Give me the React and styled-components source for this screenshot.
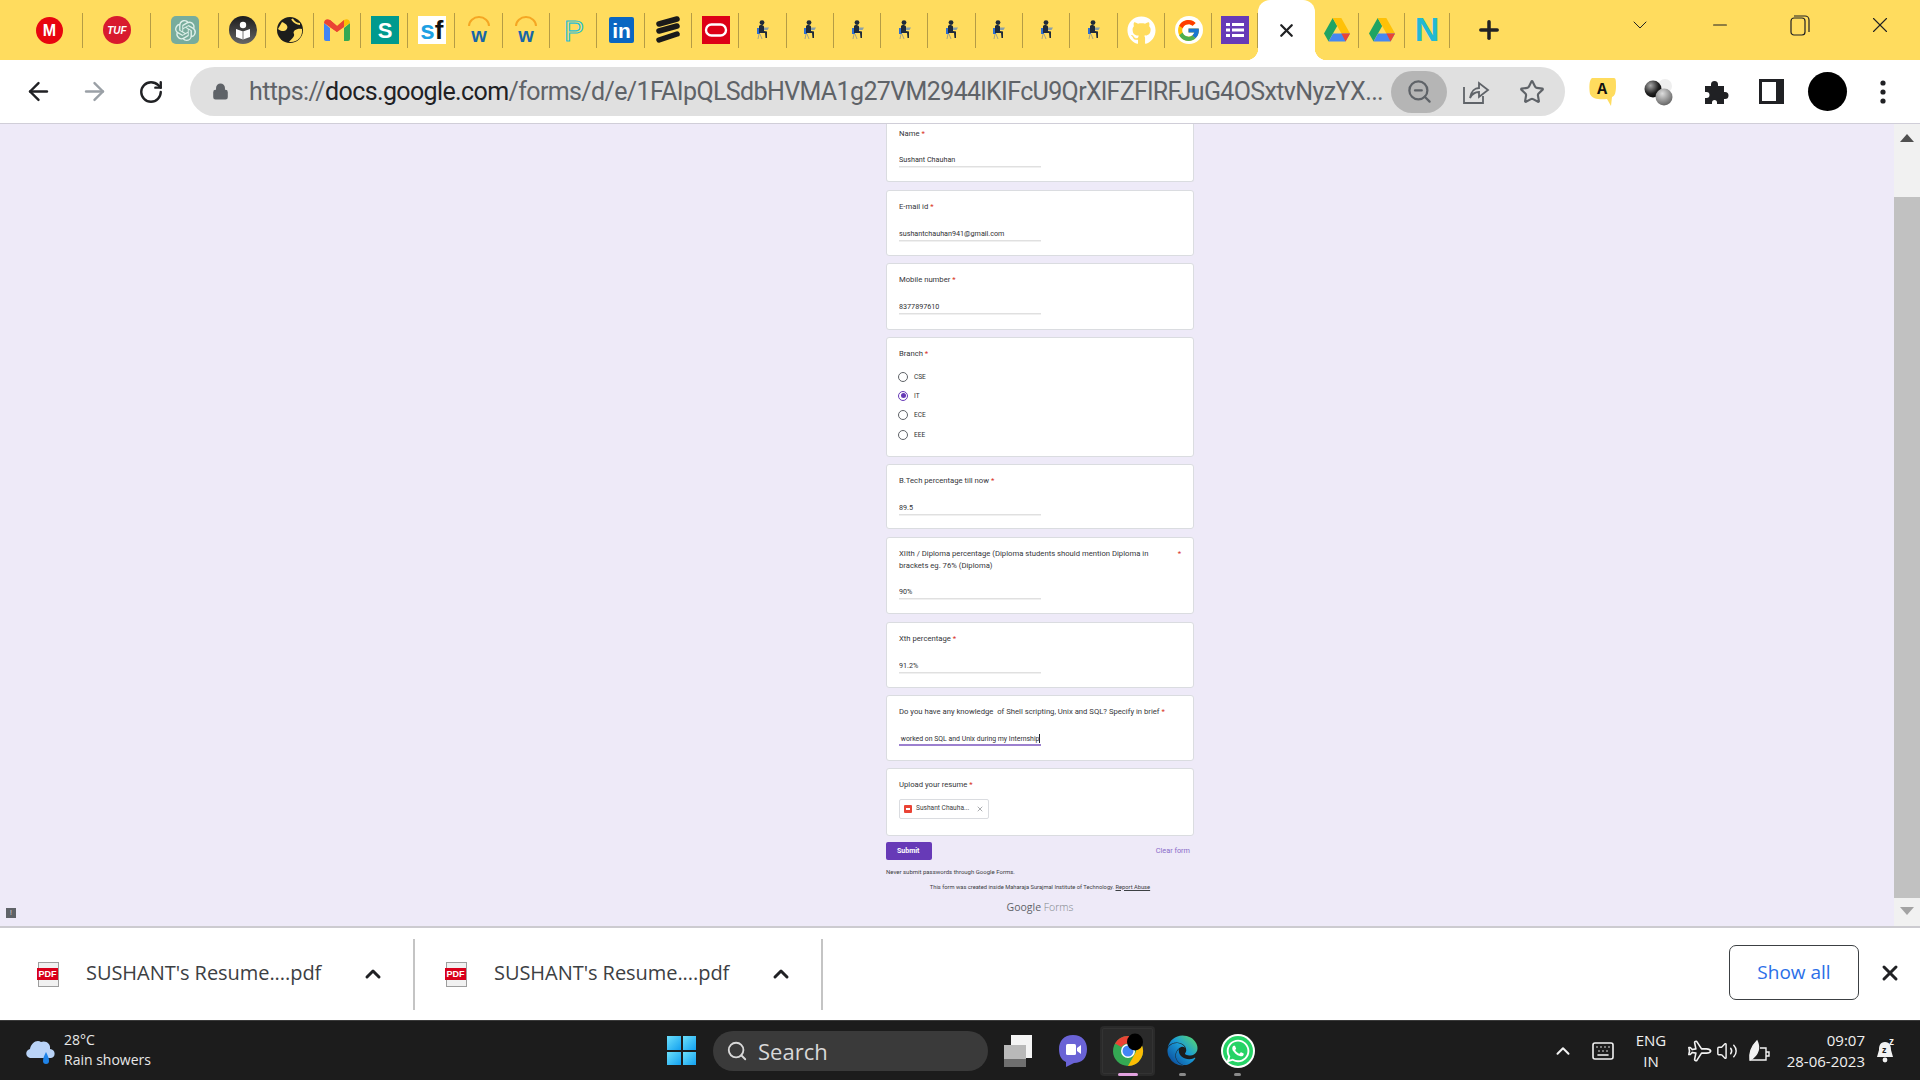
import React from 'react';
import styled, { createGlobalStyle } from 'styled-components';
import {
  ArrowLeft, ArrowRight, RotateCw, Lock, ZoomOut, Star, X, Plus, ChevronDown, ChevronUp,
  Minus, Search, Keyboard, Volume2, Plane,
} from 'lucide-react';
import { FaGithub, FaWhatsapp, FaEdge } from 'react-icons/fa';
import { FcGoogle } from 'react-icons/fc';
import { SiOpenai } from 'react-icons/si';

const GlobalStyle = createGlobalStyle`
  html, body { margin: 0; padding: 0; height: 100%; overflow: hidden; }
  body { font-family: Roboto, "Liberation Sans", sans-serif; }
  * { box-sizing: border-box; }
  svg { overflow: visible; }
`;

const Page = styled.div`
  width: 1920px;
  height: 1080px;
  display: flex;
  flex-direction: column;
  overflow: hidden;
`;

/* ---------- tab strip ---------- */
const TabStrip = styled.div`
  height: 60px;
  flex: none;
  display: flex;
  background: #ffdc5e;
`;

const Tab = styled.div`
  width: ${p => p.$w}px;
  flex: none;
  display: flex;
  align-items: center;
  justify-content: center;
  padding-left: ${p => p.$pl || 0}px;
  position: relative;

  &::after {
    content: '';
    position: absolute;
    right: 0;
    top: 13px;
    height: 35px;
    width: 1px;
    background: #b59c45;
  }
`;

const ActiveTab = styled.div`
  width: 57px;
  flex: none;
  display: flex;
  align-items: center;
  justify-content: center;
  background: #fff;
  border-radius: 12px 12px 0 0;
  position: relative;

  &::before, &::after {
    content: '';
    position: absolute;
    bottom: 0;
    width: 12px;
    height: 12px;
  }
  &::before {
    left: -12px;
    background: radial-gradient(circle at 0 0, transparent 12px, #fff 12.5px);
  }
  &::after {
    right: -12px;
    background: radial-gradient(circle at 100% 0, transparent 12px, #fff 12.5px);
  }
`;

const NewTab = styled.div`
  width: 78px;
  display: flex;
  align-items: center;
  justify-content: center;
  color: #202124;
`;

const WindowControls = styled.div`
  margin-left: auto;
  display: flex;
`;

const WindowButton = styled.div`
  width: 80px;
  height: 50px;
  display: flex;
  align-items: center;
  justify-content: center;
  color: #202124;
`;

/* ---------- toolbar ---------- */
const Toolbar = styled.div`
  height: 63px;
  flex: none;
  display: flex;
  align-items: center;
  padding-left: 10px;
  background: #fff;
`;

const NavButton = styled.div`
  width: ${p => p.$w || 56}px;
  flex: none;
  display: flex;
  align-items: center;
  justify-content: center;
  color: ${p => p.$muted ? '#9aa0a6' : '#202124'};
`;

const AddressBar = styled.div`
  width: 1375px;
  height: 49px;
  margin: 0 10px 0 10px;
  flex: none;
  display: flex;
  align-items: center;
  padding-left: 22px;
  border-radius: 25px;
  background: #e0e0e0;
`;

const Url = styled.div`
  width: 1135px;
  margin-left: 20px;
  margin-right: 7px;
  flex: none;
  font-family: Roboto, "Open Sans", sans-serif;
  font-size: 25px;
  letter-spacing: -0.62px;
  color: #5f6368;
  white-space: nowrap;
  overflow: hidden;

  b {
    font-weight: 400;
    color: #202124;
  }
`;

const ZoomBubble = styled.div`
  width: 56px;
  height: 42px;
  flex: none;
  display: flex;
  align-items: center;
  justify-content: center;
  border-radius: 21px;
  background: #b5b5b5;
  color: #5f6368;
`;

/* ---------- form page ---------- */
const Viewport = styled.div`
  flex: 1;
  min-height: 0;
  display: flex;
  background: #eeeaf8;
  border-top: 1px solid #d0ced8;
  border-bottom: 2px solid #cccbd0;
`;

const FormArea = styled.div`
  flex: 1;
  min-width: 0;
  padding-left: 886px;
  position: relative;
`;

const Column = styled.div`
  width: 308px;
  display: flex;
  flex-direction: column;
  gap: 7.5px;
`;

const Card = styled.div`
  height: ${p => p.$h}px;
  flex: none;
  background: #fff;
  border: 1px solid #dadce0;
  border-radius: ${p => p.$cut ? '0 0 3px 3px' : '3px'};
  border-top-width: ${p => p.$cut ? 0 : 1}px;
  padding: ${p => p.$cut ? 4 : 10}px 12px 0;
`;

const Question = styled.div`
  display: flex;
  justify-content: space-between;
  font-size: 7.7px;
  line-height: 12px;
  color: #35363a;
  white-space: pre-wrap;
`;

const QuestionText = styled.span`
  width: ${p => p.$w ? p.$w + 'px' : 'auto'};
`;

const Required = styled.span`
  color: #d93025;
`;

const Answer = styled.div`
  width: 142px;
  margin-top: ${p => p.$mt || 15}px;
  height: 13px;
  font-size: ${p => p.$focus ? 6.9 : 7.2}px;
  line-height: 12px;
  color: #303134;
  white-space: pre;
  overflow: hidden;
  border-bottom: ${p => p.$focus ? '2px solid #9c80cf' : '1px solid #e0e0e0'};
  box-shadow: ${p => p.$focus ? 'none' : '0 1px 0 #f0f0f0'};
`;

const Caret = styled.span`
  display: inline-block;
  width: 1px;
  height: 9px;
  vertical-align: -2px;
  background: #202124;
`;

const RadioList = styled.div`
  margin: 7px 0 0 -1px;
  display: flex;
  flex-direction: column;
`;

const RadioRow = styled.div`
  height: 19.3px;
  display: flex;
  align-items: center;
  gap: 6px;
  font-size: 6.5px;
  color: #303134;
`;

const RadioDot = styled.span`
  width: 10px;
  height: 10px;
  flex: none;
  border-radius: 50%;
  border: 1px solid ${p => p.$on ? '#673ab7' : '#5f6368'};
  display: flex;
  align-items: center;
  justify-content: center;

  &::after {
    content: '';
    width: 5px;
    height: 5px;
    border-radius: 50%;
    background: ${p => p.$on ? '#673ab7' : 'transparent'};
  }
`;

const FileChip = styled.div`
  width: 90px;
  height: 20px;
  margin-top: 8px;
  display: flex;
  align-items: center;
  padding: 0 4px;
  border: 1px solid #dadce0;
  border-radius: 2px;
  font-size: 6.6px;
  color: #3c4043;
`;

const FileName = styled.span`
  margin-left: 4px;
  flex: 1;
  padding-bottom: 3px;
  white-space: nowrap;
`;

const ChipPdf = styled.span`
  width: 8px;
  height: 8px;
  flex: none;
  background: #ea4335;
  border-radius: 1px;
  display: flex;
  align-items: center;
  justify-content: center;

  &::after {
    content: '';
    width: 4px;
    height: 2px;
    background: #fff;
  }
`;

const SubmitRow = styled.div`
  margin: -1.5px 4px 0 0;
  display: flex;
  align-items: center;
  justify-content: space-between;
`;

const SubmitButton = styled.div`
  width: 46px;
  height: 18px;
  display: flex;
  align-items: center;
  padding-left: 11px;
  background: #673ab7;
  border-radius: 2px;
  color: #fff;
  font-size: 7px;
  font-weight: 700;
`;

const ClearForm = styled.span`
  font-size: 7.3px;
  color: #8a6bc9;
`;

const NeverNote = styled.div`
  margin-top: 0.5px;
  font-size: 6px;
  line-height: 8px;
  color: #3c4043;
`;

const CreatedNote = styled.div`
  margin-top: -0.5px;
  text-align: center;
  font-size: 5.75px;
  line-height: 8px;
  color: #3c4043;

  u {
    text-decoration-thickness: 1px;
  }
`;

const FormsLogo = styled.div`
  margin-top: 0.5px;
  text-align: center;
  font-family: "Open Sans", sans-serif;
  font-size: 10.5px;
  line-height: 16px;
  color: #5f6368;

  span {
    font-weight: 300;
    color: #80868b;
  }
`;

const FeedbackFlag = styled.div`
  position: absolute;
  left: 6px;
  bottom: 8px;
  width: 10px;
  height: 10px;
  background: #5f6368;
  color: #ddd;
  font-size: 7px;
  line-height: 10px;
  text-align: center;
`;

const Scrollbar = styled.div`
  width: 26px;
  flex: none;
  display: flex;
  flex-direction: column;
  background: #f1f1f1;
`;

const ScrollArrow = styled.div`
  height: ${p => p.$h}px;
  flex: none;
  display: flex;
  justify-content: center;
  padding-top: ${p => p.$pt}px;

  &::after {
    content: '';
    width: 0;
    height: 0;
    border-left: 7px solid transparent;
    border-right: 7px solid transparent;
    ${p => p.$up ? 'border-bottom: 8px solid #505050;' : 'border-top: 8px solid #a3a3a3;'}
  }
`;

const ScrollThumb = styled.div`
  flex: 1;
  background: #c1c1c1;
`;

/* ---------- downloads ---------- */
const DownloadBar = styled.div`
  height: 92px;
  flex: none;
  display: flex;
  align-items: center;
  background: #fff;
`;

const DownloadItem = styled.div`
  width: ${p => p.$w}px;
  height: 71px;
  flex: none;
  display: flex;
  align-items: center;
  padding-left: ${p => p.$pl}px;
  border-right: 2px solid #c4c4c4;
`;

const DownloadName = styled.span`
  width: 235px;
  margin: 0 0 3px 27px;
  flex: none;
  font-family: "Open Sans", "Noto Sans", sans-serif;
  font-size: 20px;
  letter-spacing: -0.05px;
  color: #3c4043;
  white-space: nowrap;
`;

const DownloadCaret = styled.span`
  margin-left: 40px;
  display: flex;
  color: #202124;
`;

const PdfDoc = styled.span`
  width: 21px;
  height: 25px;
  flex: none;
  display: flex;
  align-items: center;
  background: #f1f1f1;
  border: 1px solid #9e9e9e;
`;

const PdfBand = styled.span`
  width: 23px;
  margin-left: -2px;
  height: 12px;
  background: #d9001b;
  color: #fff;
  font-family: "Liberation Sans", sans-serif;
  font-size: 9px;
  font-weight: 700;
  line-height: 12px;
  text-align: center;
`;

const ShowAll = styled.div`
  width: 130px;
  height: 55px;
  margin: 0 0 3px auto;
  padding-bottom: 2px;
  display: flex;
  align-items: center;
  justify-content: center;
  border: 1px solid #3c4043;
  border-radius: 7px;
  font-family: "Open Sans", "Noto Sans", sans-serif;
  font-size: 19px;
  color: #2b6fe8;
`;

const CloseBar = styled.div`
  width: 61px;
  margin-bottom: 2px;
  display: flex;
  justify-content: center;
  color: #202124;
`;

/* ---------- taskbar ---------- */
const Taskbar = styled.div`
  height: 60px;
  flex: none;
  display: flex;
  align-items: center;
  background: #1c1c1c;
  border-top: 1px solid #3a3a3a;
  color: #f2f2f2;
  font-family: "Open Sans", "Noto Sans", sans-serif;
`;

const Weather = styled.div`
  width: 667px;
  flex: none;
  display: flex;
  align-items: center;
  gap: 7px;
  padding-left: 25px;
`;

const WeatherText = styled.div`
  font-size: 14px;
  line-height: 20px;
  margin-top: -1px;
  color: #e8e8e8;
`;

const WinLogo = styled.div`
  width: 29px;
  height: 29px;
  flex: none;
  display: grid;
  grid-template-columns: 1fr 1fr;
  gap: 2px;

  span {
    background: linear-gradient(135deg, #6ce0fb, #12a0f0);
  }
`;

const SearchPill = styled.div`
  width: 275px;
  height: 40px;
  margin-left: 17px;
  flex: none;
  display: flex;
  align-items: center;
  gap: 10px;
  padding-left: 13px;
  border-radius: 20px;
  background: #3a3a3a;
  font-size: 22px;
  color: #d8d8d8;
`;

const TaskApps = styled.div`
  margin-left: 2px;
  display: flex;
`;

const TaskSlot = styled.div`
  width: 55px;
  height: 50px;
  flex: none;
  display: flex;
  align-items: center;
  justify-content: center;
  position: relative;
  border-radius: 4px;
  ${p => p.$active && 'background: #2a2a2a; outline: 1px solid #333; outline-offset: -3px;'}

  &::after {
    content: '';
    position: absolute;
    bottom: 0;
    display: ${p => p.$mark ? 'block' : 'none'};
    height: 3px;
    border-radius: 2px;
    width: ${p => p.$active ? 20 : 7}px;
    background: ${p => p.$active ? '#e3a3e0' : '#8a8a8a'};
  }
`;

const Tray = styled.div`
  margin-left: auto;
  padding-right: 13px;
  display: flex;
  align-items: center;
`;

const TraySlot = styled.div`
  width: ${p => p.$w}px;
  flex: none;
  display: flex;
  align-items: center;
  justify-content: center;
  color: #f2f2f2;
`;

const TrayText = styled.div`
  width: ${p => p.$w}px;
  flex: none;
  font-size: 15px;
  line-height: 21px;
  text-align: ${p => p.$align};
  color: #f0f0f0;
`;

const RightPlane = styled(Plane)`
  transform: rotate(45deg);
`;

/* ---------- favicons and app icons ---------- */
const Mega = () => (
  <svg width="27" height="27" viewBox="0 0 27 27">
    <circle cx="13.5" cy="13.5" r="13.5" fill="#e8050f" />
    <text x="13.5" y="19" textAnchor="middle" fontFamily="Liberation Sans" fontWeight="700" fontSize="16" fill="#fff">M</text>
  </svg>
);

const Tuf = () => (
  <svg width="28" height="28" viewBox="0 0 28 28">
    <circle cx="14" cy="14" r="14" fill="#d81a2e" />
    <text x="14" y="17.5" textAnchor="middle" fontFamily="Liberation Sans" fontWeight="700" fontStyle="italic" fontSize="10" fill="#fff">TUF</text>
  </svg>
);

const GptTile = styled.span`
  width: 28px;
  height: 28px;
  display: flex;
  align-items: center;
  justify-content: center;
  border-radius: 5px;
  background: #78ac9c;
  color: #dff0ea;
`;

const Reader = () => (
  <svg width="28" height="28" viewBox="0 0 28 28">
    <defs>
      <linearGradient id="readerBg" x1="0" y1="0" x2="0" y2="1">
        <stop offset="0" stopColor="#1b1b1b" /><stop offset="1" stopColor="#666" />
      </linearGradient>
    </defs>
    <circle cx="14" cy="14" r="14" fill="url(#readerBg)" />
    <circle cx="14" cy="9" r="3.2" fill="#fff" />
    <path d="M7 13 L14 15.5 L21 13 V21 L14 23.5 L7 21 Z" fill="#fff" />
    <path d="M14 15.5 V23.5" stroke="#555" strokeWidth="0.8" />
  </svg>
);

const Globe = () => (
  <svg width="26" height="26" viewBox="0 0 26 26">
    <circle cx="13" cy="13" r="13" fill="#1d1d1b" />
    <path d="M5 5 C10 7 12 10 9 13 C7 15 3 14 1 12 Z" fill="#ffdc5e" />
    <path d="M25 12 C20 11 15 14 17 17 C18 20 14 22 12 25 C20 26 26 20 25 12 Z" fill="#ffdc5e" />
    <path d="M15 2 C17 5 20 7 23 7" stroke="#ffdc5e" strokeWidth="2" fill="none" />
  </svg>
);

const Gmail = () => (
  <svg width="26" height="22" viewBox="0 0 26 22">
    <path d="M0 4 V20 A2 2 0 0 0 2 22 H6 V9 Z" fill="#4285f4" />
    <path d="M26 4 V20 A2 2 0 0 1 24 22 H20 V9 Z" fill="#34a853" />
    <path d="M0 4 C0 1 3 -1 6 1 L13 7 V13 L0 4 Z" fill="#ea4335" />
    <path d="M26 4 C26 1 23 -1 20 1 L13 7 V13 L20 8 Z" fill="#fbbc04" />
    <path d="M6 1 L13 7 L20 1 V8 L13 13 L6 8 Z" fill="#ea4335" />
  </svg>
);

const Scribd = () => (
  <svg width="28" height="28" viewBox="0 0 28 28">
    <rect width="28" height="28" fill="#009a8e" />
    <text x="14" y="22" textAnchor="middle" fontFamily="Liberation Sans" fontWeight="700" fontSize="22" fill="#fff">S</text>
  </svg>
);

const SfText = styled.span`
  width: 28px;
  height: 28px;
  display: flex;
  align-items: flex-end;
  justify-content: center;
  background: #fff;
  font-family: "Liberation Sans", sans-serif;
  font-size: 26px;
  font-weight: 700;
  line-height: 28px;
  color: #1ca0e3;

  i {
    font-style: normal;
    color: #111;
  }
`;

const Workday = () => (
  <svg width="26" height="28" viewBox="0 0 26 28">
    <path d="M3 10 A10 9 0 0 1 23 10" fill="none" stroke="#f5a623" strokeWidth="2" />
    <text x="13" y="26" textAnchor="middle" fontFamily="Liberation Sans" fontWeight="700" fontSize="20" fill="#1666a8">w</text>
  </svg>
);

const Pearson = () => (
  <svg width="24" height="30" viewBox="0 0 24 30">
    <text x="12" y="26" textAnchor="middle" fontFamily="Liberation Sans" fontSize="30" fill="none" stroke="#26bfd6" strokeWidth="1.2">P</text>
  </svg>
);

const LinkedIn = () => (
  <svg width="25" height="26" viewBox="0 0 25 26">
    <rect width="25" height="26" rx="2" fill="#0a66c2" />
    <text x="12.5" y="21" textAnchor="middle" fontFamily="Liberation Sans" fontWeight="700" fontSize="21" fill="#fff">in</text>
  </svg>
);

const Ericsson = () => (
  <svg width="24" height="28" viewBox="0 0 24 28">
    <g stroke="#1a1a1a" strokeWidth="5.5" strokeLinecap="round">
      <path d="M3 8 L21 3" /><path d="M3 15 L21 10" /><path d="M3 24 L21 18" />
    </g>
  </svg>
);

const Oracle = () => (
  <svg width="28" height="28" viewBox="0 0 28 28">
    <rect width="28" height="28" fill="#dd0016" />
    <rect x="4" y="8.5" width="20" height="11" rx="5.5" fill="none" stroke="#fff" strokeWidth="2.4" />
  </svg>
);

// seated figure with a laptop, the same favicon on eight tabs
const Person = () => (
  <svg width="14" height="20" viewBox="0 0 14 20">
    <path d="M1 8 H4 V14 H1 Z" fill="#2f6fd0" />
    <circle cx="6" cy="2.6" r="2.4" fill="#1e2a3a" />
    <path d="M3 6 C4 4.5 7 4.5 8 6.5 L8 11 L11 11.5 L11 18 H9.5 L9 13 H3 Z" fill="#1e2a3a" />
    <path d="M8 7.5 H13 L11.5 10 H8 Z" fill="#8aa0a8" />
    <path d="M3 14 L2 19 M4 14 L6 19" stroke="#a8a488" strokeWidth="1" />
  </svg>
);

const GoogleDisc = styled.span`
  width: 28px;
  height: 28px;
  display: flex;
  align-items: center;
  justify-content: center;
  border-radius: 50%;
  background: #fff;
`;

const GithubMark = styled(FaGithub)`
  color: #fff;
`;

const FormsIcon = () => (
  <svg width="28" height="28" viewBox="0 0 28 28">
    <rect width="28" height="28" fill="#673ab7" />
    <g fill="#fff">
      <rect x="5" y="7" width="4" height="3" /><rect x="11" y="7" width="12" height="3" />
      <rect x="5" y="12.5" width="4" height="3" /><rect x="11" y="12.5" width="12" height="3" />
      <rect x="5" y="18" width="4" height="3" /><rect x="11" y="18" width="12" height="3" />
    </g>
  </svg>
);

const Drive = () => (
  <svg width="26" height="24" viewBox="0 0 26 24">
    <path d="M8.7 0 L0 15.5 L4.5 23.5 L13.2 8 Z" fill="#1fa463" />
    <path d="M8.7 0 H17.3 L26 15.5 H17.4 Z" fill="#ffc107" />
    <path d="M4.5 23.5 H21.5 L26 15.5 H9 Z" fill="#4688f1" />
    <path d="M26 15.5 L21.5 23.5 L17.4 15.5 Z" fill="#ea4335" />
  </svg>
);

const Notion = () => (
  <svg width="30" height="30" viewBox="0 0 30 30">
    <text x="15" y="26" textAnchor="middle" fontFamily="Liberation Sans" fontWeight="700" fontSize="34" fill="#22b8d4">N</text>
  </svg>
);

const Restore = () => (
  <svg width="20" height="22" viewBox="0 0 20 22" fill="none" stroke="#202124" strokeWidth="1.2">
    <rect x="1" y="4" width="14" height="17" rx="3" />
    <path d="M4 2 H15 A4 4 0 0 1 19 6 V18" />
  </svg>
);

const ShareArrow = () => (
  <svg width="28" height="26" viewBox="0 0 28 26" fill="none" stroke="#5f6368" strokeWidth="1.8">
    <path d="M2 8 V24 H21 V17" />
    <path d="M8 19 C9 12 13 9 17 9 V4 L26 11 L17 18 V13 C13 13 10 15 8 19 Z" />
  </svg>
);

const AnnotateExt = () => (
  <svg width="30" height="32" viewBox="0 0 30 32">
    <path d="M4 2 H26 C28 2 28 5 28 10 C28 16 27 20 24 21 L23 30 L19 23 C12 24 4 23 2 18 C1 12 1 4 4 2 Z" fill="#ffdc5e" />
    <text x="14" y="18" textAnchor="middle" fontFamily="Liberation Mono" fontWeight="700" fontSize="17" fill="#111">A</text>
  </svg>
);

const Spheres = () => (
  <svg width="30" height="28" viewBox="0 0 30 28">
    <defs>
      <radialGradient id="sph1" cx="0.35" cy="0.3" r="0.8"><stop offset="0" stopColor="#aaa" /><stop offset="0.6" stopColor="#222" /><stop offset="1" stopColor="#000" /></radialGradient>
      <radialGradient id="sph2" cx="0.4" cy="0.3" r="0.8"><stop offset="0" stopColor="#ddd" /><stop offset="1" stopColor="#555" /></radialGradient>
    </defs>
    <circle cx="21" cy="8" r="7" fill="#eee" />
    <circle cx="9" cy="11" r="8.5" fill="url(#sph1)" />
    <circle cx="20" cy="19" r="8.5" fill="url(#sph2)" />
  </svg>
);

const Puzzle = () => (
  <svg width="26" height="26" viewBox="0 0 26 26" fill="#202124">
    <path d="M3 7 H9 V5.5 A3.5 3.5 0 0 1 16 5.5 V7 H22 V13 H23 A3.5 3.5 0 0 1 23 20 H22 V25 H15 V23.5 A2.5 2.5 0 0 0 10 23.5 V25 H3 V19 H4.5 A3 3 0 0 0 4.5 13 H3 Z" />
  </svg>
);

const SidePanel = () => (
  <svg width="25" height="25" viewBox="0 0 25 25">
    <rect width="25" height="25" fill="#202124" />
    <rect x="3" y="3" width="14" height="19" fill="#fff" />
  </svg>
);

const AvatarDot = styled.span`
  width: 39px;
  height: 39px;
  border-radius: 50%;
  background: #000;
`;

const Dots = () => (
  <svg width="6" height="26" viewBox="0 0 6 26" fill="#202124">
    <circle cx="3" cy="4" r="2.6" /><circle cx="3" cy="13" r="2.6" /><circle cx="3" cy="22" r="2.6" />
  </svg>
);

const RainCloud = () => (
  <svg width="32" height="32" viewBox="0 0 32 32">
    <path d="M5 23 C0 22 0 15 5 14 C6 8 12 4 16 7 C21 5 26 9 25 14 C31 14 31 23 26 23 Z" fill="#b9d3f7" />
    <path d="M21 17 C23 21 24 23 24 26 A3 3 0 0 1 18 26 C18 23 19 21 21 17 Z" fill="#1f83e8" />
  </svg>
);

const FilesIcon = () => (
  <svg width="32" height="36" viewBox="0 0 32 36">
    <rect x="9" y="2" width="21" height="23" fill="#f4f4f4" />
    <rect x="2" y="12" width="22" height="15" fill="#b9b9b9" />
    <rect x="2" y="26" width="22" height="8" fill="#6f6f6f" />
  </svg>
);

const MeetIcon = () => (
  <svg width="30" height="34" viewBox="0 0 30 34">
    <path d="M15 1 C24 1 29 7 29 15 C29 24 24 29 16 29 L8 33 V28 C3 26 1 21 1 15 C1 7 6 1 15 1 Z" fill="#6a63d6" />
    <rect x="8" y="10" width="10" height="11" rx="1.5" fill="#fff" />
    <path d="M19 14 L23 11 V20 L19 17 Z" fill="#fff" />
  </svg>
);

const ChromeIcon = () => (
  <svg width="32" height="36" viewBox="0 0 32 36">
    <circle cx="16" cy="18" r="15" fill="#34a853" />
    <path d="M3 10.5 A15 15 0 0 1 29 10.5 H16 A7.5 7.5 0 0 0 9.5 14 Z" fill="#ea4335" />
    <path d="M29 10.5 A15 15 0 0 1 16 33 L22.5 21.5 A7.5 7.5 0 0 0 22 12 Z" fill="#fbbc04" />
    <circle cx="16" cy="18" r="7" fill="#fff" />
    <circle cx="16" cy="18" r="5.5" fill="#4285f4" />
    <ellipse cx="23" cy="9" rx="8" ry="8.5" fill="#000" />
  </svg>
);

const EdgeIcon = () => (
  <svg width="31" height="36" viewBox="0 0 31 36">
    <defs>
      <linearGradient id="edgeFill" x1="0.9" y1="0.1" x2="0.1" y2="0.9">
        <stop offset="0" stopColor="#52d17a" /><stop offset="0.45" stopColor="#1a9bd7" /><stop offset="1" stopColor="#0c4f9e" />
      </linearGradient>
    </defs>
    <FaEdge x="0" y="2" size="31" fill="url(#edgeFill)" />
  </svg>
);

const WhatsappDisc = styled.span`
  width: 30px;
  height: 30px;
  display: flex;
  align-items: center;
  justify-content: center;
  border-radius: 50%;
  background: #25d366;
  color: #fff;
  box-shadow: 0 0 0 2px #fff;
`;

const BatteryLeaf = () => (
  <svg width="24" height="24" viewBox="0 0 24 24" fill="none" stroke="#f2f2f2" strokeWidth="1.4">
    <path d="M4 21 H20 V9 H14" />
    <path d="M4 21 C3 12 7 6 11 2 C14 8 13 16 4 21 Z" fill="#f2f2f2" />
    <path d="M20 13 H23 V17 H20" />
  </svg>
);

const NotifyBell = () => (
  <svg width="24" height="30" viewBox="0 0 24 30">
    <path d="M11 6 C6 6 5 10 5 14 L3 21 H19 L17 14 C17 10 16 6 11 6 Z" fill="#f2f2f2" />
    <circle cx="11" cy="24" r="2.4" fill="#f2f2f2" />
    <text x="15" y="9" fontFamily="Liberation Sans" fontWeight="700" fontSize="10" fill="#f2f2f2">z</text>
    <text x="8" y="17" fontFamily="Liberation Sans" fontWeight="700" fontSize="9" fill="#1c1c1c">z</text>
  </svg>
);

const favicons = [
  { w: 83, pl: 15, icon: <Mega /> },
  { w: 68, icon: <Tuf /> },
  { w: 68, icon: <GptTile><SiOpenai size={21} /></GptTile> },
  { w: 47.3, icon: <Reader /> },
  { w: 47.3, icon: <Globe /> },
  { w: 47.3, icon: <Gmail /> },
  { w: 47.3, icon: <Scribd /> },
  { w: 47.3, icon: <SfText>s<i>f</i></SfText> },
  { w: 47.3, icon: <Workday /> },
  { w: 47.3, icon: <Workday /> },
  { w: 47.3, icon: <Pearson /> },
  { w: 47.3, icon: <LinkedIn /> },
  { w: 47.3, icon: <Ericsson /> },
  { w: 47.3, icon: <Oracle /> },
  ...Array.from({ length: 8 }, () => ({ w: 47.3, icon: <Person /> })),
  { w: 47.3, icon: <GithubMark size={29} /> },
  { w: 47.3, icon: <GoogleDisc><FcGoogle size={25} /></GoogleDisc> },
  { w: 45.7, icon: <FormsIcon /> },
];

const textQuestions = [
  { id: 'email', label: 'E-mail id', value: 'sushantchauhan941@gmail.com', h: 66 },
  { id: 'mobile', label: 'Mobile number', value: '8377897610', h: 66.5 },
];

const branches = ['CSE', 'IT', 'ECE', 'EEE'];

const QuestionLine = ({ children }) => (
  <Question><span>{children} <Required>*</Required></span></Question>
);

const App = () => (
  <Page>
    <GlobalStyle />

    <TabStrip>
      {favicons.map((tab, i) => (
        <Tab key={i} $w={tab.w} $pl={tab.pl}>{tab.icon}</Tab>
      ))}
      <ActiveTab><X size={21} strokeWidth={2.6} color="#202124" /></ActiveTab>
      <Tab $w={44}><Drive /></Tab>
      <Tab $w={46}><Drive /></Tab>
      <Tab $w={45}><Notion /></Tab>
      <NewTab><Plus size={28} strokeWidth={3} /></NewTab>
      <WindowControls>
        <WindowButton><ChevronDown size={24} strokeWidth={1} /></WindowButton>
        <WindowButton><Minus size={22} strokeWidth={1.2} /></WindowButton>
        <WindowButton><Restore /></WindowButton>
        <WindowButton><X size={26} strokeWidth={1} /></WindowButton>
      </WindowControls>
    </TabStrip>

    <Toolbar>
      <NavButton><ArrowLeft size={29} strokeWidth={2} /></NavButton>
      <NavButton $muted><ArrowRight size={29} strokeWidth={2} /></NavButton>
      <NavButton $w={58}><RotateCw size={26} strokeWidth={2.2} /></NavButton>
      <AddressBar>
        <Lock size={17} strokeWidth={2.6} color="#5f6368" fill="#5f6368" />
        <Url>
          https://<b>docs.google.com</b>/forms/d/e/1FAIpQLSdbHVMA1g27VM2944lKIFcU9QrXlFZFlRFJuG4OSxtvNyzYX...
        </Url>
        <ZoomBubble><ZoomOut size={27} strokeWidth={2} /></ZoomBubble>
        <NavButton $w={57}><ShareArrow /></NavButton>
        <NavButton $w={55}><Star size={26} strokeWidth={2} color="#5f6368" /></NavButton>
      </AddressBar>
      <NavButton><AnnotateExt /></NavButton>
      <NavButton><Spheres /></NavButton>
      <NavButton><Puzzle /></NavButton>
      <NavButton><SidePanel /></NavButton>
      <NavButton><AvatarDot /></NavButton>
      <NavButton><Dots /></NavButton>
    </Toolbar>

    <Viewport>
      <FormArea>
        <Column>
          <Card $cut $h={58}>
            <QuestionLine>Name</QuestionLine>
            <Answer $mt={14}>Sushant Chauhan</Answer>
          </Card>
          {textQuestions.map(q => (
            <Card key={q.id} $h={q.h}>
              <QuestionLine>{q.label}</QuestionLine>
              <Answer>{q.value}</Answer>
            </Card>
          ))}
          <Card $h={119.5}>
            <QuestionLine>Branch</QuestionLine>
            <RadioList>
              {branches.map(b => (
                <RadioRow key={b}>
                  <RadioDot $on={b === 'IT'} />
                  {b}
                </RadioRow>
              ))}
            </RadioList>
          </Card>
          <Card $h={65}>
            <QuestionLine>B.Tech percentage till now</QuestionLine>
            <Answer>89.5</Answer>
          </Card>
          <Card $h={77.5}>
            <Question>
              <QuestionText $w={256}>
                XIIth / Diploma percentage (Diploma students should mention Diploma in brackets eg. 76% (Diploma)
              </QuestionText>
              <Required>*</Required>
            </Question>
            <Answer $mt={14}>90%</Answer>
          </Card>
          <Card $h={66}>
            <QuestionLine>Xth percentage</QuestionLine>
            <Answer>91.2%</Answer>
          </Card>
          <Card $h={65.5}>
            <QuestionLine>Do you have any knowledge  of Shell scripting, Unix and SQL? Specify in brief</QuestionLine>
            <Answer $focus> worked on SQL and Unix during my Internship<Caret /></Answer>
          </Card>
          <Card $h={67.5}>
            <QuestionLine>Upload your resume</QuestionLine>
            <FileChip>
              <ChipPdf />
              <FileName>Sushant Chauha...</FileName>
              <X size={8} strokeWidth={1.6} color="#5f6368" />
            </FileChip>
          </Card>
          <SubmitRow>
            <SubmitButton>Submit</SubmitButton>
            <ClearForm>Clear form</ClearForm>
          </SubmitRow>
          <NeverNote>Never submit passwords through Google Forms.</NeverNote>
          <CreatedNote>This form was created inside Maharaja Surajmal Institute of Technology. <u>Report Abuse</u></CreatedNote>
          <FormsLogo>Google <span>Forms</span></FormsLogo>
        </Column>
        <FeedbackFlag>!</FeedbackFlag>
      </FormArea>
      <Scrollbar>
        <ScrollArrow $up $h={73} $pt={10} />
        <ScrollThumb />
        <ScrollArrow $h={28} $pt={9} />
      </Scrollbar>
    </Viewport>

    <DownloadBar>
      <DownloadItem $w={415} $pl={38}>
        <PdfDoc><PdfBand>PDF</PdfBand></PdfDoc>
        <DownloadName>SUSHANT's Resume....pdf</DownloadName>
        <DownloadCaret><ChevronUp size={24} strokeWidth={3} /></DownloadCaret>
      </DownloadItem>
      <DownloadItem $w={408} $pl={31}>
        <PdfDoc><PdfBand>PDF</PdfBand></PdfDoc>
        <DownloadName>SUSHANT's Resume....pdf</DownloadName>
        <DownloadCaret><ChevronUp size={24} strokeWidth={3} /></DownloadCaret>
      </DownloadItem>
      <ShowAll>Show all</ShowAll>
      <CloseBar><X size={24} strokeWidth={3} /></CloseBar>
    </DownloadBar>

    <Taskbar>
      <Weather>
        <RainCloud />
        <WeatherText>28°C<br />Rain showers</WeatherText>
      </Weather>
      <WinLogo><span /><span /><span /><span /></WinLogo>
      <SearchPill><Search size={22} strokeWidth={2} />Search</SearchPill>
      <TaskApps>
        <TaskSlot><FilesIcon /></TaskSlot>
        <TaskSlot><MeetIcon /></TaskSlot>
        <TaskSlot $active $mark><ChromeIcon /></TaskSlot>
        <TaskSlot $mark><EdgeIcon /></TaskSlot>
        <TaskSlot $mark><WhatsappDisc><FaWhatsapp size={26} /></WhatsappDisc></TaskSlot>
      </TaskApps>
      <Tray>
        <TraySlot $w={36}><ChevronUp size={22} strokeWidth={2.2} /></TraySlot>
        <TraySlot $w={44}><Keyboard size={24} strokeWidth={1.6} /></TraySlot>
        <TrayText $w={52} $align="center">ENG<br />IN</TrayText>
        <TraySlot $w={42}><RightPlane size={24} strokeWidth={1.6} /></TraySlot>
        <TraySlot $w={16}><Volume2 size={22} strokeWidth={1.6} /></TraySlot>
        <TraySlot $w={46}><BatteryLeaf /></TraySlot>
        <TrayText $w={84} $align="right">09:07<br />28-06-2023</TrayText>
        <TraySlot $w={42}><NotifyBell /></TraySlot>
      </Tray>
    </Taskbar>
  </Page>
);

export default App;
